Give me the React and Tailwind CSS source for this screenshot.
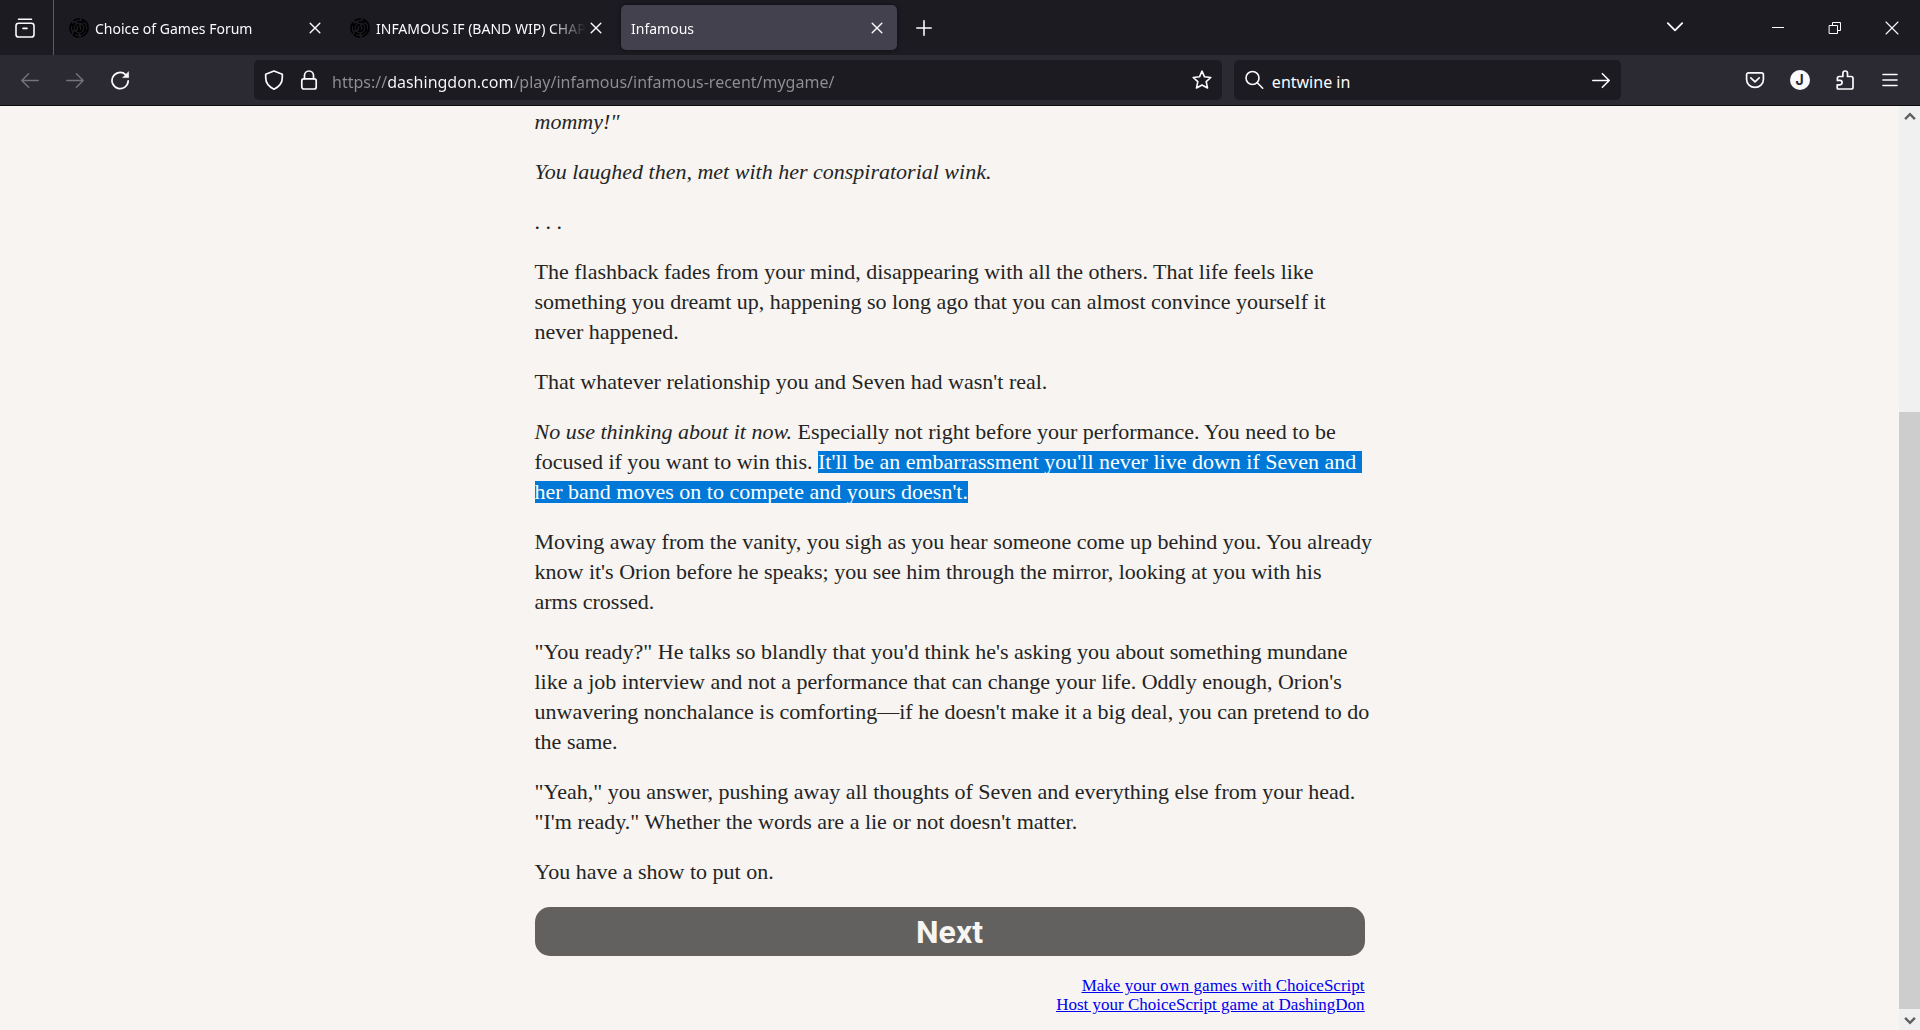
import React, { useState } from 'react';
import clsx from 'clsx';

const TABS = [
  { id: 'forum', title: 'Choice of Games Forum', favicon: true },
  { id: 'wip', title: 'INFAMOUS IF (BAND WIP) CHAP', favicon: true },
  { id: 'game', title: 'Infamous', favicon: false },
];

function Icon({ children, size = 20, width = 1.5, className }) {
  return (
    <svg
      width={size}
      height={size}
      viewBox="0 0 20 20"
      fill="none"
      stroke="currentColor"
      strokeWidth={width}
      strokeLinecap="round"
      strokeLinejoin="round"
      className={clsx('shrink-0', className)}
      aria-hidden="true"
    >
      {children}
    </svg>
  );
}

function MazeIcon() {
  return (
    <Icon className="text-black" width={1.6}>
      <circle cx="10" cy="10" r="9" strokeDasharray="12 1.8 7 1.6" strokeLinecap="butt" />
      <circle cx="10" cy="10" r="6.2" strokeDasharray="8 2 5 1.6" strokeLinecap="butt" />
      <circle cx="10" cy="10" r="3.4" strokeDasharray="7 1.8" strokeLinecap="butt" />
      <path d="M10 9v4.5M3.8 6.5l-2 1M13.5 4.5l1.5-2M16 12l2.5 1M6 15l-1.4 2" />
    </Icon>
  );
}

function CloseIcon() {
  return (
    <Icon width={1.4}>
      <path d="M5.2 5.2l9.6 9.6M14.8 5.2l-9.6 9.6" />
    </Icon>
  );
}

function ToolButton({ label, disabled, children }) {
  return (
    <button
      type="button"
      aria-label={label}
      disabled={disabled}
      className="flex h-10 w-[45px] shrink-0 items-center justify-center rounded hover:bg-white/10 disabled:text-[#75747c] disabled:hover:bg-transparent"
    >
      {children}
    </button>
  );
}

function TabStrip() {
  const [active, setActive] = useState('game');

  return (
    <div className="flex h-[55px] shrink-0 items-center bg-[#1c1b22]">
      <button type="button" aria-label="Recent browsing" className="flex h-full w-[54px] shrink-0 items-center justify-center border-r border-[#5b5b66] pr-1">
        <Icon width={1.6}>
          <rect x="1" y="5.2" width="18" height="13.8" rx="2.6" />
          <path d="M3.5 1.2h13M8 10.4h4" />
        </Icon>
      </button>

      <div role="tablist" className="flex min-w-0 gap-[5px] pl-[5px]">
        {TABS.map((tab) => (
          <div
            key={tab.id}
            className={clsx(
              'flex h-[45px] w-[276px] min-w-0 items-center rounded-[5px] px-2.5',
              active === tab.id && 'bg-[#42414d] shadow-[0_0_4px_rgba(0,0,0,0.5)]'
            )}
          >
            <button
              type="button"
              role="tab"
              aria-selected={active === tab.id}
              onClick={() => setActive(tab.id)}
              className="flex min-w-0 flex-1 items-center gap-1.5 text-left"
            >
              {tab.favicon && <MazeIcon />}
              <span className="min-w-0 flex-1 overflow-hidden whitespace-nowrap pt-0.5 [mask-image:linear-gradient(to_left,transparent,black_36px)]">
                {tab.title}
              </span>
            </button>
            <button type="button" aria-label={`Close ${tab.title}`} className="rounded">
              <CloseIcon />
            </button>
          </div>
        ))}
      </div>

      <button type="button" aria-label="New tab" className="ml-1 flex size-[45px] shrink-0 items-center justify-center">
        <Icon width={1.6}>
          <path d="M10 2.8v14.4M2.8 10h14.4" />
        </Icon>
      </button>

      <button type="button" aria-label="List all tabs" className="ml-auto mr-[52px] flex size-[45px] shrink-0 items-center justify-center">
        <Icon width={1.8}>
          <path d="M2.8 5.2l7.2 7.2 7.2-7.2" />
        </Icon>
      </button>

      <div className="flex h-full shrink-0">
        <button type="button" aria-label="Minimize" className="flex w-[57px] items-center justify-center">
          <Icon width={1}>
            <path d="M4 9.5h12" strokeLinecap="butt" />
          </Icon>
        </button>
        <button type="button" aria-label="Restore" className="flex w-[57px] items-center justify-center">
          <Icon width={1}>
            <path d="M4.5 7.5h8v8h-8zM7.5 7.5v-3h8v8h-3" strokeLinejoin="miter" />
          </Icon>
        </button>
        <button type="button" aria-label="Close window" className="flex w-[57px] items-center justify-center">
          <Icon width={1.1}>
            <path d="M4 4l12 12M16 4L4 16" />
          </Icon>
        </button>
      </div>
    </div>
  );
}

function Toolbar() {
  return (
    <div className="flex h-[51px] shrink-0 items-center border-b border-[#0c0c0d] bg-[#2b2a33] pl-[7px] pr-2">
      <ToolButton label="Back" disabled>
        <Icon width={1.4}>
          <path d="M18.2 10.5H1.8M8.6 3.7L1.8 10.5l6.8 6.8" />
        </Icon>
      </ToolButton>
      <ToolButton label="Forward" disabled>
        <Icon width={1.4}>
          <path d="M1.8 10.5h16.4M11.4 3.7l6.8 6.8-6.8 6.8" />
        </Icon>
      </ToolButton>
      <ToolButton label="Reload">
        <Icon width={1.7}>
          <path d="M18.2 10.8a8.1 8.1 0 1 1-2.6-6.2l1.2 1.2" />
          <path d="M18.6 2v5.6h-5.6z" fill="currentColor" strokeWidth="0.6" />
        </Icon>
      </ToolButton>

      <div className="ml-28 flex h-10 min-w-0 flex-[5] items-center rounded-[5px] bg-[#1c1b22]">
        <Icon className="ml-2.5" width={1.7}>
          <path d="M10 1l8.3 3.2v3.6c0 5-3.2 9-8.3 11.4C4.9 16.8 1.7 12.8 1.7 7.8V4.2z" />
        </Icon>
        <Icon className="ml-[15px]" width={1.7}>
          <rect x="2.8" y="8.8" width="14.4" height="10.2" rx="2" />
          <path d="M5.5 8.6V5.5a4.500 4.500 0 0 1 9 0v3.100" />
        </Icon>
        <input
          type="text"
          aria-label="Address"
          defaultValue="https://dashingdon.com/play/infamous/infamous-recent/mygame/"
          className="ml-[13px] h-full min-w-0 flex-1 bg-[linear-gradient(90deg,#8f8f94_55px,#fbfbfe_55px,#fbfbfe_182px,#8f8f94_182px)] bg-clip-text pt-1 text-base text-transparent outline-none"
        />
        <button type="button" aria-label="Bookmark this page" className="mr-2.5">
          <Icon width={1.6}>
            <path d="M10 1.200l2.500 5.600 6.300.7-4.600 4.200 1.300 6.300L10 15l-5.500 3 1.300-6.300L1.200 7.500l6.300-.7z" />
          </Icon>
        </button>
      </div>

      <div className="ml-3 mr-[111px] flex h-10 min-w-0 flex-[2] items-center rounded-[5px] bg-[#1c1b22]">
        <Icon className="ml-2.5" width={1.6}>
          <circle cx="8.5" cy="8" r="6.5" />
          <path d="M13.3 12.8l5.400 5.400" />
        </Icon>
        <input
          type="text"
          aria-label="Search"
          defaultValue="entwine in"
          className="ml-2 h-full min-w-0 flex-1 bg-transparent pt-1 text-base outline-none"
        />
        <button type="button" aria-label="Go" className="mr-2.5">
          <Icon width={1.6}>
            <path d="M1.8 10.5h16.4M11.4 3.7l6.8 6.8-6.8 6.8" />
          </Icon>
        </button>
      </div>

      <ToolButton label="Save to Pocket">
        <Icon width={1.7}>
          <path d="M3.6 2.8h12.8a2 2 0 0 1 2 2v4.600a8.400 8 0 0 1-16.800 0V4.800a2 2 0 0 1 2-2z" />
          <path d="M5.8 7.8L10 11.8l4.200-4" />
        </Icon>
      </ToolButton>
      <ToolButton label="Account">
        <span className="flex size-5 items-center justify-center rounded-full bg-[#fbfbfe] font-['Inter',sans-serif] text-sm font-bold text-[#2b2a33]">
          J
        </span>
      </ToolButton>
      <ToolButton label="Extensions">
        <Icon width={1.7}>
          <path d="M3.200 19h13a1.800 1.800 0 0 0 1.800-1.800V8.300a1.800 1.800 0 0 0-1.800-1.800h-3.700V3.300a2.300 2.300 0 0 0-4.600 0v3.200H4.200a1.800 1.800 0 0 0-1.800 1.800v2.100h2.500a2.200 2.200 0 0 1 0 4.400H2.200v3.200A1 1 0 0 0 3.200 19z" />
        </Icon>
      </ToolButton>
      <ToolButton label="Menu">
        <Icon width={1.6}>
          <path d="M3 4.500h14M3 10h14M3 15.500h14" />
        </Icon>
      </ToolButton>
    </div>
  );
}

function Selected({ children }) {
  return <span className="inline-block whitespace-pre bg-[#0078d7] leading-[22px] text-white">{children}</span>;
}

function Story() {
  return (
    <main className="mx-auto w-full max-w-[830px] pt-px font-['Liberation_Serif',serif] text-[22px] leading-[30px] text-[#242424]">
      <div className="flex flex-col gap-5 lg:whitespace-nowrap">
        <p className="italic">mommy!"</p>
        <p className="italic">You laughed then, met with her conspiratorial wink.</p>
        <p>. . .</p>
        <p>
          The flashback fades from your mind, disappearing with all the others. That life feels like
          <br />
          something you dreamt up, happening so long ago that you can almost convince yourself it
          <br />
          never happened.
        </p>
        <p>That whatever relationship you and Seven had wasn't real.</p>
        <p>
          <i>No use thinking about it now.</i> Especially not right before your performance. You need to be
          <br />
          focused if you want to win this. <Selected>{"It'll be an embarrassment you'll never live down if Seven and "}</Selected>
          <br />
          <Selected>her band moves on to compete and yours doesn't.</Selected>
        </p>
        <p>
          Moving away from the vanity, you sigh as you hear someone come up behind you. You already
          <br />
          know it's Orion before he speaks; you see him through the mirror, looking at you with his
          <br />
          arms crossed.
        </p>
        <p>
          "You ready?" He talks so blandly that you'd think he's asking you about something mundane
          <br />
          like a job interview and not a performance that can change your life. Oddly enough, Orion's
          <br />
          unwavering nonchalance is comforting—if he doesn't make it a big deal, you can pretend to do
          <br />
          the same.
        </p>
        <p>
          "Yeah," you answer, pushing away all thoughts of Seven and everything else from your head.
          <br />
          "I'm ready." Whether the words are a lie or not doesn't matter.
        </p>
        <p>You have a show to put on.</p>
      </div>

      <button
        type="button"
        className="mt-5 flex h-[49px] w-full items-center justify-center rounded-[15px] bg-[#626160] font-['Roboto',sans-serif] text-[32px] font-bold text-[#f7f4f1]"
      >
        Next
      </button>

      <div className="mt-5 flex flex-col items-end text-[17px] leading-[19px] text-[#0000ee] underline">
        <a href="#choicescript">Make your own games with ChoiceScript</a>
        <a href="#dashingdon">Host your ChoiceScript game at DashingDon</a>
      </div>
    </main>
  );
}

function Scrollbar() {
  return (
    <div className="flex w-[21px] shrink-0 flex-col bg-[#f0f0f0] text-[#606060]" aria-hidden="true">
      <div className="flex h-[21px] items-center justify-center">
        <Icon size={14} width={3.5}>
          <path d="M3 13l7-7 7 7" strokeLinecap="butt" strokeLinejoin="miter" />
        </Icon>
      </div>
      <div className="flex-[285]" />
      <div className="flex-[597] bg-[#cdcdcd]" />
      <div className="flex h-[21px] items-center justify-center">
        <Icon size={14} width={3.5}>
          <path d="M3 7l7 7 7-7" strokeLinecap="butt" strokeLinejoin="miter" />
        </Icon>
      </div>
    </div>
  );
}

export default function App() {
  return (
    <div className="flex h-screen flex-col overflow-hidden bg-[#f7f4f1]">
      <header className="shrink-0 font-['Noto_Sans',sans-serif] text-sm text-[#fbfbfe]">
        <TabStrip />
        <Toolbar />
      </header>
      <div className="flex min-h-0 flex-1">
        <div className="min-w-0 flex-1 overflow-hidden">
          <Story />
        </div>
        <Scrollbar />
      </div>
    </div>
  );
}
